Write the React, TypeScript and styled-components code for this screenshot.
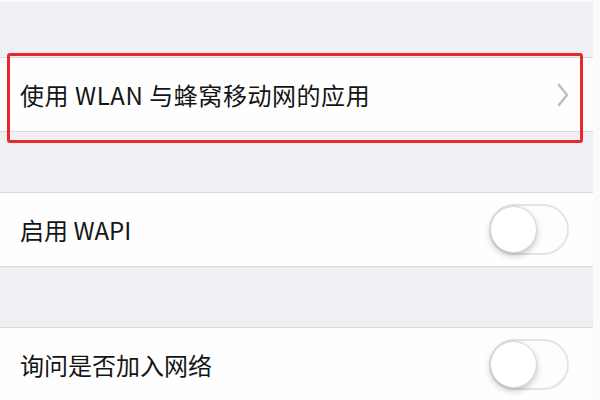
import styled, { createGlobalStyle } from 'styled-components';

const GlobalStyle = createGlobalStyle`
  html, body {
    margin: 0;
    padding: 0;
    background: #fbfbfb;
  }
  body {
    font-family: "Noto Sans CJK SC", "Noto Sans", sans-serif;
    overflow: hidden;
  }
`;

const Page = styled.div`
  width: 593px;
  height: 398px;
  margin-top: 2px;
  background: #efeff4;
  display: flex;
  flex-direction: column;
  overflow: hidden;
`;

const Gap = styled.div<{ h: number }>`
  height: ${(p) => p.h}px;
  flex-shrink: 0;
`;

const Row = styled.div`
  position: relative;
  flex-shrink: 0;
  height: 73px;
  display: flex;
  align-items: center;
  justify-content: space-between;
  padding: 0 24px 0 20px;
  background: #fefefe;
  border-top: 1px solid #d9d9de;
  border-bottom: 1px solid #d9d9de;
`;

const Label = styled.span<{ wide?: boolean }>`
  font-size: 24px;
  color: #151515;
  letter-spacing: ${(p) => (p.wide ? '0.55px' : '0')};
  white-space: nowrap;
`;

const Highlight = styled.div`
  position: absolute;
  top: -5px;
  bottom: -12px;
  left: 7px;
  right: 10px;
  border: 3px solid #e8292b;
  border-radius: 3px;
  pointer-events: none;
`;

const Chevron = styled.svg`
  width: 14px;
  height: 26px;
  margin-right: -1px;
`;

const Track = styled.div`
  position: relative;
  width: 80px;
  height: 51px;
  box-sizing: border-box;
  border: 2px solid #e4e4e4;
  border-radius: 26px;
  background: #fdfdfd;
`;

const Knob = styled.div`
  position: absolute;
  top: 0;
  left: -1px;
  width: 47px;
  height: 47px;
  box-sizing: border-box;
  border-radius: 50%;
  background: #fff;
  border: 1px solid #d6d6d6;
  box-shadow: 0 3px 6px rgba(0, 0, 0, 0.22);
`;

function Toggle() {
  return (
    <Track>
      <Knob />
    </Track>
  );
}

export default function App() {
  return (
    <>
      <GlobalStyle />
      <Page>
        <Gap h={55} />
        <Row>
          <Label wide>使用 WLAN 与蜂窝移动网的应用</Label>
          <Chevron viewBox="0 0 14 26">
            <path d="M3 3 L11 13 L3 23" fill="none" stroke="#bfbfc4" strokeWidth="2.6" strokeLinecap="round" strokeLinejoin="round" />
          </Chevron>
          <Highlight />
        </Row>
        <Gap h={60} />
        <Row>
          <Label>启用 WAPI</Label>
          <Toggle />
        </Row>
        <Gap h={60} />
        <Row>
          <Label>询问是否加入网络</Label>
          <Toggle />
        </Row>
      </Page>
    </>
  );
}
